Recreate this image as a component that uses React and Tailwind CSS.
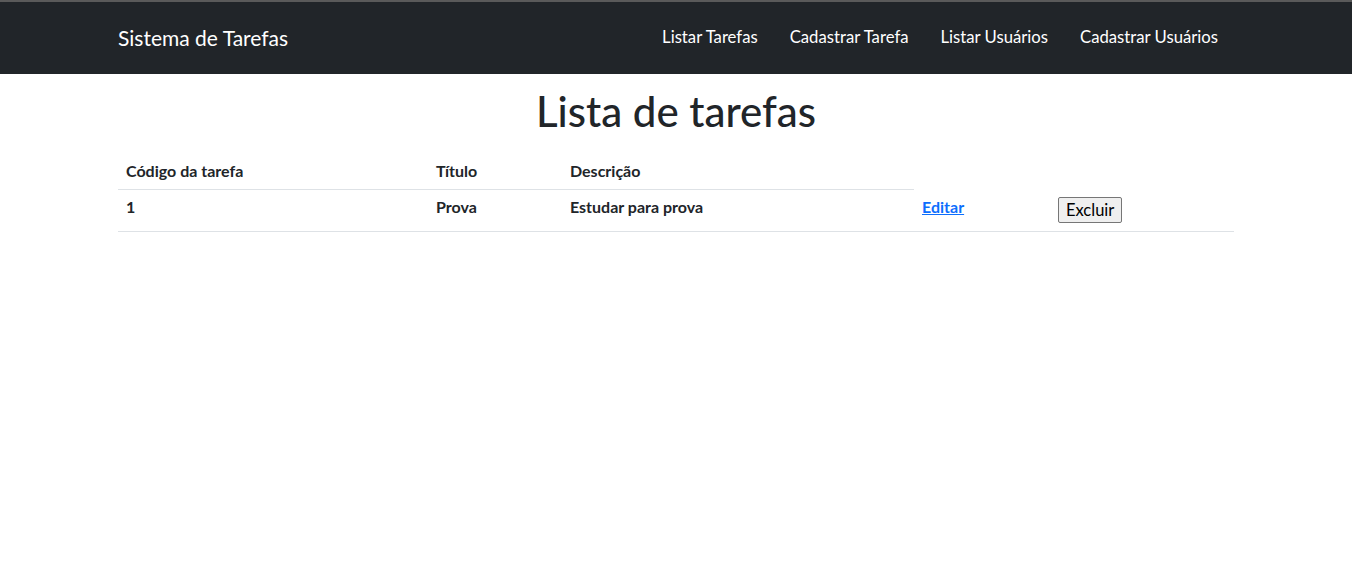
import React from 'react';

const tasks = [{ id: 1, titulo: 'Prova', descricao: 'Estudar para prova' }];

const links = ['Listar Tarefas', 'Cadastrar Tarefa', 'Listar Usuários', 'Cadastrar Usuários'];

export default function App() {
  return (
    <div className="min-h-[588px] bg-white text-[#212529]" style={{ fontFamily: 'Lato, "Liberation Sans", sans-serif' }}>
      <nav className="border-t-2 border-[#5a5a5a] bg-[#212529]">
        <div className="mx-auto flex h-[72px] w-[1140px] items-center justify-between px-3 pb-[1px]">
          <span className="text-[21px] text-white">Sistema de Tarefas</span>
          <ul className="flex">
            {links.map(l => (
              <li key={l}>
                <a href="#" className="block px-4 text-[16.7px] text-white">{l}</a>
              </li>
            ))}
          </ul>
        </div>
      </nav>

      <div className="mx-auto w-[1140px] px-3">
        <h1 className="mt-[13px] mb-[14px] text-center text-[42px] leading-[48px] font-medium">Lista de tarefas</h1>
        <table className="w-full border-collapse text-[16px]">
          <thead>
            <tr>
              <th className="w-[310px] border-b border-[#dee2e6] px-2 pt-[10px] pb-[6px] text-left font-bold">Código da tarefa</th>
              <th className="w-[134px] border-b border-[#dee2e6] px-2 pt-[10px] pb-[6px] text-left font-bold">Título</th>
              <th className="w-[352px] border-b border-[#dee2e6] px-2 pt-[10px] pb-[6px] text-left font-bold">Descrição</th>
            </tr>
          </thead>
          <tbody>
            {tasks.map(t => (
              <tr key={t.id} className="border-b border-[#dee2e6]">
                <td className="px-2 pt-[5px] align-top font-bold">{t.id}</td>
                <td className="px-2 pt-[5px] align-top font-bold">{t.titulo}</td>
                <td className="px-2 pt-[5px] align-top font-bold">{t.descricao}</td>
                <td className="w-[136px] px-2 pt-[5px] align-top font-bold">
                  <a href="#" className="text-[#0d6efd] underline">Editar</a>
                </td>
                <td className="px-2 pt-[7px] pb-2 align-top">
                  <button className="block rounded-[2px] border border-[#767676] bg-[#efefef] px-[7px] text-[16.5px] leading-[24px] text-black">Excluir</button>
                </td>
              </tr>
            ))}
          </tbody>
        </table>
      </div>
    </div>
  );
}
